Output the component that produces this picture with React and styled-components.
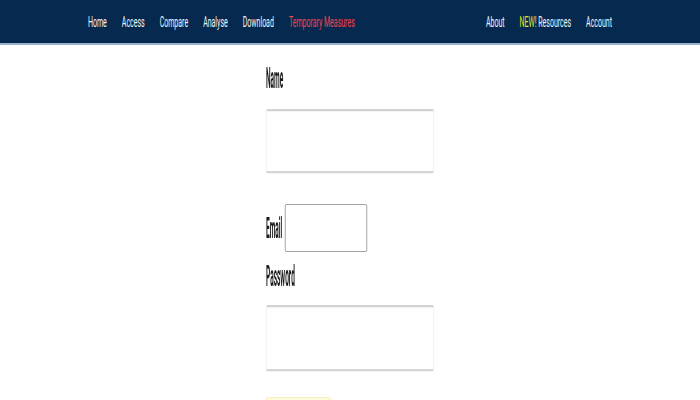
import React from 'react'
import styled, { createGlobalStyle } from 'styled-components'

// the whole page is laid out at twice the width and squeezed to half,
// the way the reference was captured

const Global = createGlobalStyle`
  html, body {
    margin: 0;
    padding: 0;
    background: #fff;
    overflow: hidden;
  }
  body {
    font-family: Roboto, "Liberation Sans", sans-serif;
  }
`

const Page = styled.div`
  width: 1400px;
  height: 400px;
  overflow: hidden;
  transform: scaleX(0.5);
  transform-origin: 0 0;
`

const NavBar = styled.nav`
  height: 43px;
  background: #05294f;
  border-bottom: 2px solid #97b2c8;
  display: flex;
  align-items: center;
  justify-content: space-between;
  padding: 0 176px;
`

const NavGroup = styled.div`
  display: flex;
  align-items: center;
  gap: 30px;
`

const NavLink = styled.a`
  font-size: 14px;
  color: ${p => p.alert ? '#f0434f' : '#f2f5f9'};
  text-decoration: none;
  white-space: nowrap;
`

const New = styled.span`
  color: #dde81e;
`

const Form = styled.form`
  width: 336px;
  margin: 0 auto;
  padding-top: 19px;
  display: flex;
  flex-direction: column;
`

const Label = styled.label`
  display: inline-block;
  font-size: 29px;
  line-height: 28px;
  height: 28px;
  font-weight: 700;
  color: #1a1a1a;
  white-space: nowrap;
  transform: scaleX(0.45);
  transform-origin: left center;
  margin-top: ${p => p.top || 0}px;
  margin-right: ${p => p.pull ? -p.pull : 0}px;
`

const Field = styled.input`
  box-sizing: border-box;
  width: 336px;
  height: ${p => p.h || 64}px;
  margin-top: ${p => p.top || 0}px;
  border: 1px solid #e6e6e6;
  border-top: 2px solid #d2d2d2;
  border-bottom: 2px solid #d6d6d6;
  border-radius: 3px;
  box-shadow: inset 0 1px 2px rgba(0, 0, 0, 0.06), 0 1px 1px rgba(0, 0, 0, 0.05);
  background: #fff;
  outline: none;
`

const Row = styled.div`
  display: flex;
  align-items: center;
  margin-top: 31px;
`

const SmallField = styled.input`
  box-sizing: border-box;
  width: 164px;
  height: 48px;
  border: 1px solid #858585;
  border-radius: 2px;
  background: #fff;
  outline: none;
`

const Submit = styled.button`
  width: 130px;
  height: 36px;
  margin-top: 26px;
  border: 1px solid #f3eaa6;
  border-radius: 3px;
  background: linear-gradient(#fffbe0, #fbf09a);
`

export default function App () {
  return (
    <Page>
      <Global />
      <NavBar>
        <NavGroup>
          <NavLink href="#">Home</NavLink>
          <NavLink href="#">Access</NavLink>
          <NavLink href="#">Compare</NavLink>
          <NavLink href="#">Analyse</NavLink>
          <NavLink href="#">Download</NavLink>
          <NavLink href="#" alert>Temporary Measures</NavLink>
        </NavGroup>
        <NavGroup>
          <NavLink href="#">About</NavLink>
          <NavLink href="#"><New>NEW!</New> Resources</NavLink>
          <NavLink href="#">Account</NavLink>
        </NavGroup>
      </NavBar>
      <Form onSubmit={e => e.preventDefault()}>
        <div><Label>Name</Label></div>
        <Field top={17} />
        <Row>
          <Label pull={34}>Email</Label>
          <SmallField />
        </Row>
        <div><Label top={10}>Password</Label></div>
        <Field type="password" top={15} h={66} />
        <Submit type="submit" />
      </Form>
    </Page>
  )
}
